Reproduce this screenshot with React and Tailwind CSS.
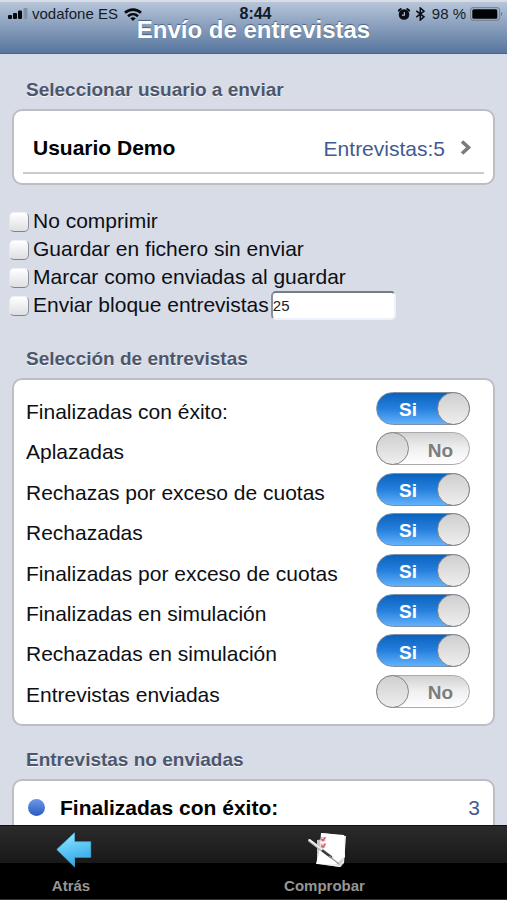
import { useState } from "react";

const FILTERS = [
  ["Finalizadas con éxito:", true],
  ["Aplazadas", false],
  ["Rechazas por exceso de cuotas", true],
  ["Rechazadas", true],
  ["Finalizadas por exceso de cuotas", true],
  ["Finalizadas en simulación", true],
  ["Rechazadas en simulación", true],
  ["Entrevistas enviadas", false],
];

const OPTIONS = ["No comprimir", "Guardar en fichero sin enviar", "Marcar como enviadas al guardar", "Enviar bloque entrevistas"];

function StatusBar() {
  return (
    <div className="absolute inset-x-0 top-1 flex h-4 items-center justify-between pr-1 pl-2 text-[15px] leading-4 text-[#141c28]">
      <div className="flex items-center gap-1">
        <svg width="20" height="12" viewBox="0 0 20 12" aria-hidden="true">
          <rect x="0" y="7" width="4" height="4" rx="1" fill="#05080d" />
          <rect x="5" y="5" width="4" height="6" rx="1" fill="#05080d" />
          <rect x="10" y="2.500" width="4" height="8.500" rx="1" fill="#05080d" />
          <rect x="15.500" y="0" width="4" height="11" rx="1" fill="#8391a7" />
        </svg>
        <span className="mr-0.5">vodafone ES</span>
        <svg width="18" height="13" viewBox="0 0 18 13" fill="none" stroke="#05080d" strokeWidth="2.600" aria-hidden="true">
          <path d="M1 4.800C5.500.5 12.500.5 17 4.800" />
          <path d="M4 8.200c2.900-2.700 7.100-2.700 10 0" />
          <path d="M6.300 10.200 9 12.900l2.700-2.700c-1.500-1.400-3.900-1.400-5.400 0Z" fill="#05080d" stroke="none" />
        </svg>
      </div>
      <span className="absolute left-1/2 -translate-x-1/2 pl-1 text-[16px] font-bold text-[#111a26]">8:44</span>
      <div className="flex items-center">
        <svg width="14" height="14" viewBox="0 0 14 14" aria-hidden="true">
          <circle cx="7" cy="7.500" r="5.300" fill="#0a0e15" />
          <path d="M1.800 3.600 3.800 2M12.200 3.600 10.200 2" stroke="#0a0e15" strokeWidth="2" strokeLinecap="round" />
          <path d="M7.400 4.900v3.200H5" fill="none" stroke="#b4c0d2" strokeWidth="1.100" />
        </svg>
        <svg className="mr-1.5 ml-1" width="11" height="14" viewBox="0 0 11 14" fill="none" stroke="#0a0e15" strokeWidth="1.500" aria-hidden="true">
          <path d="m1.300 3.800 7.700 6L5.300 13V1L9 4.200l-7.700 6" />
        </svg>
        <span className="mr-1">98 %</span>
        <svg width="33" height="14" viewBox="0 0 33 14" aria-hidden="true">
          <rect x="0.600" y="0.600" width="29" height="12.800" rx="3" fill="none" stroke="#7a8698" strokeWidth="1.100" />
          <rect x="2.300" y="2.300" width="25" height="9.400" rx="1.500" fill="#020304" />
          <path d="M31 5c1.500.6 1.500 3.400 0 4Z" fill="#677489" />
        </svg>
      </div>
    </div>
  );
}

function SectionTitle({ children }) {
  return (
    <h2 className="px-[26px] text-[19px] leading-6 font-bold text-[#4c566c] [text-shadow:0_1px_0_#f4f6fa]">{children}</h2>
  );
}

function Toggle({ label, initial }) {
  const [on, setOn] = useState(initial);
  return (
    <label className="flex items-start justify-between">
      <span className="pt-1.5 leading-7">{label}</span>
      <span
        className={
          "relative flex h-[33px] w-[94px] shrink-0 items-center rounded-full border text-[19px] font-bold " +
          (on
            ? "border-[#7c8fa8] bg-gradient-to-b from-[#0863bd] via-[#257fdc] to-[#61b2fb] text-white"
            : "border-[#aaa] bg-gradient-to-b from-[#d2d2d2] via-[#f0f0f0] to-white text-[#7d7d7d]")
        }
      >
        <input
          type="checkbox"
          checked={on}
          onChange={() => setOn(!on)}
          className="absolute inset-0 cursor-pointer appearance-none rounded-full"
        />
        <span className={"pointer-events-none w-full pt-1 " + (on ? "pl-[22px]" : "pr-4 text-right")}>{on ? "Si" : "No"}</span>
        <span
          className={
            "pointer-events-none absolute -top-px size-[33px] rounded-full border border-[#858585] bg-gradient-to-b from-[#cfcfcf] to-[#eeeeee] " +
            (on ? "-right-px" : "-left-px")
          }
        />
      </span>
    </label>
  );
}

function BackIcon() {
  return (
    <svg className="ml-1.5" width="36" height="36" viewBox="0 0 36 36" aria-hidden="true">
      <defs>
        <linearGradient id="arrow" x1="0" y1="0" x2="0.300" y2="1">
          <stop offset="0" stopColor="#a8ebff" />
          <stop offset="0.500" stopColor="#62caf8" />
          <stop offset="1" stopColor="#36a9e8" />
        </linearGradient>
      </defs>
      <path d="M.8 17.500 18.500.8v9h16.200v15.500H18.500v9.500Z" fill="url(#arrow)" stroke="#4bb9e8" strokeWidth="0.700" />
    </svg>
  );
}

function CheckIcon() {
  return (
    <svg className="ml-1.5" width="40" height="36" viewBox="0 0 40 36" aria-hidden="true">
      <path d="M9 8 34 5l2 24-4 6-23-3Z" fill="#c9c9c9" />
      <path d="m14 1 24 3-2 27-4 4-20-3Z" fill="#efefef" />
      <path d="m13 1 23 2 1 22-8 7H8l4-16Z" fill="#fff" />
      <path d="m28 32 8-7-3 10-5-3" fill="#d5d5d5" />
      <path d="M13 5.500h4V9h-4zM13 12h4v3.500h-4z" fill="#f3d3d6" stroke="#d99aa0" strokeWidth="0.600" />
      <path d="m13.500 7 1.500 1.500L17.500 5M13.500 13.500 15 15l2.500-3.500" fill="none" stroke="#c44f5d" strokeWidth="1.200" />
      <path d="M1.500 8.500 14 18" stroke="#a7a7a7" strokeWidth="3" strokeLinecap="round" />
      <path d="M1.500 8 16 19" stroke="#ededed" strokeWidth="1.800" strokeLinecap="round" />
      <path d="m15 19 8 6" stroke="#3a3a3a" strokeWidth="2.800" strokeLinecap="round" />
      <path d="m21 24 10 8" stroke="#999" strokeWidth="1.200" />
    </svg>
  );
}

export default function App() {
  return (
    <div className="flex h-screen flex-col bg-[#d7dce7] pt-0.5 font-['Liberation_Sans',Arial,sans-serif] text-[21px] text-[#0d0f14]">
      <header className="relative h-[52px] shrink-0 border-b border-[#47658c] bg-gradient-to-b from-[#b7c5d9] to-[#58769e]">
        <h1 className="pt-4 text-center text-[24px] leading-6 font-bold text-white [text-shadow:0_-1px_1px_#4b5f7b]">
          Envío de entrevistas
        </h1>
        <StatusBar />
      </header>

      <main className="min-h-0 flex-1 overflow-y-auto pt-6 [scrollbar-width:none]">
        <SectionTitle>Seleccionar usuario a enviar</SectionTitle>
        <section className="mx-3 mt-[7px] h-[76px] rounded-[10px] border-2 border-[#bdbec3] bg-white px-[9px]">
          <button type="button" className="flex h-[63px] w-full items-center border-b-2 border-[#cbcbcb] pt-3 pl-[10px] text-left">
            <span className="flex-1 font-bold text-black">Usuario Demo</span>
            <span className="mr-[15px] pt-0.5 text-[#425a94]">Entrevistas:5</span>
            <svg className="mr-3" width="12" height="16" viewBox="0 0 12 16" aria-hidden="true">
              <path d="m2 1.500 6.500 6L2 13.500" fill="none" stroke="#7b7b7b" strokeWidth="3.600" />
            </svg>
          </button>
        </section>

        <div className="mt-[22px] pl-[9px]">
          {OPTIONS.map((option, i) => (
            <div key={option} className="flex h-7 items-center">
              <input
                id={"option-" + i}
                type="checkbox"
                className="mt-0.5 mr-1 size-5 shrink-0 appearance-none rounded-[5px] border border-t-[#eef1f6] border-r-[#8d929b] border-b-[#7e838c] border-l-[#e3e7ee] bg-gradient-to-b from-white to-[#dedfe2] checked:from-[#257fdc] checked:to-[#61b2fb]"
              />
              <label htmlFor={"option-" + i} className="leading-7">{option}</label>
              {i === 3 && (
                <input
                  type="text"
                  defaultValue="25"
                  aria-label="Entrevistas por bloque"
                  className="ml-0.5 h-[29px] w-[125px] rounded-[5px] border-2 border-t-[#777b83] border-r-[#edf3fa] border-b-[#edf3fa] border-l-[#8b9099] bg-white text-[15px] text-[#222]"
                />
              )}
            </div>
          ))}
        </div>

        <div className="mt-7">
          <SectionTitle>Selección de entrevistas</SectionTitle>
          <section className="mx-3 mt-[7px] grid h-[348px] grid-rows-8 rounded-[10px] border-2 border-[#bdbec3] bg-white pt-3 pr-[23px] pb-[9px] pl-3">
            {FILTERS.map(([label, initial]) => (
              <Toggle key={label} label={label} initial={initial} />
            ))}
          </section>
        </div>

        <div className="mt-[22px]">
          <SectionTitle>Entrevistas no enviadas</SectionTitle>
          <section className="mx-3 mt-[7px] flex h-16 items-start rounded-[10px] border-2 border-[#bdbec3] bg-white pt-[13px] pr-[13px] pl-[14px] leading-7">
            <span className="mt-[5px] mr-[15px] size-[17px] rounded-full bg-gradient-to-b from-[#7099e6] to-[#285bc0]" />
            <span className="flex-1 font-bold text-black">Finalizadas con éxito:</span>
            <span className="text-[#425a94]">3</span>
          </section>
        </div>
      </main>

      <nav className="flex h-[75px] shrink-0 border-t border-b border-t-[#111] border-b-[#333338] bg-[linear-gradient(#2b2b2b,#181818_37px,#000_37px)] text-[15px] font-bold text-[#969696]">
        <button type="button" className="flex w-[142px] flex-col items-center pt-1.5">
          <BackIcon />
          <span className="mt-2 leading-5">Atrás</span>
        </button>
        <button type="button" className="flex flex-1 flex-col items-center pt-1.5">
          <CheckIcon />
          <span className="mt-2 leading-5">Comprobar</span>
        </button>
      </nav>
    </div>
  );
}
